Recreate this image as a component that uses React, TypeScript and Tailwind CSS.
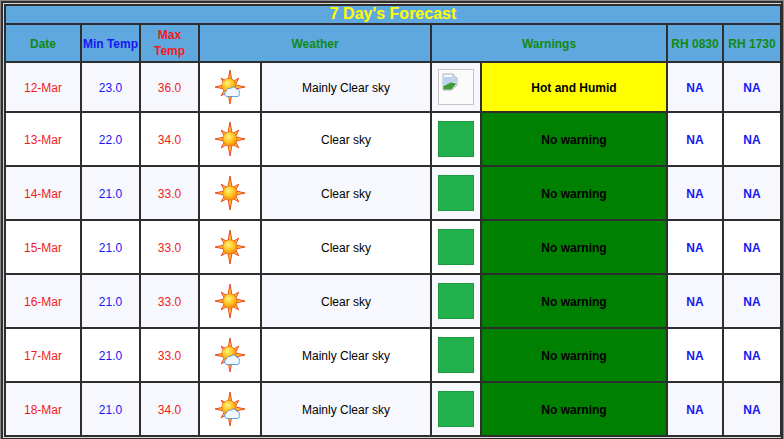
import React from "react";

type Day = {
  date: string;
  min: string;
  max: string;
  sky: "clear" | "mainly";
  warning: string;
};

const days: Day[] = [
  { date: "12-Mar", min: "23.0", max: "36.0", sky: "mainly", warning: "Hot and Humid" },
  { date: "13-Mar", min: "22.0", max: "34.0", sky: "clear", warning: "No warning" },
  { date: "14-Mar", min: "21.0", max: "33.0", sky: "clear", warning: "No warning" },
  { date: "15-Mar", min: "21.0", max: "33.0", sky: "clear", warning: "No warning" },
  { date: "16-Mar", min: "21.0", max: "33.0", sky: "clear", warning: "No warning" },
  { date: "17-Mar", min: "21.0", max: "33.0", sky: "mainly", warning: "No warning" },
  { date: "18-Mar", min: "21.0", max: "34.0", sky: "mainly", warning: "No warning" },
];

// ─── weather glyphs ───────────────────────────────────────────────
function SunIcon({ cloud, id }: { cloud: boolean; id: string }) {
  const cx = 17;
  const cy = 18;
  const rays = [0, 45, 90, 135, 180, 225, 270, 315].map((a) => {
    const len = a === 90 || a === 270 ? 17 : a % 90 === 0 ? 15 : 12.5;
    const r = (a * Math.PI) / 180;
    const px = Math.cos(r + Math.PI / 2);
    const py = Math.sin(r + Math.PI / 2);
    const bx = cx + Math.cos(r) * 5;
    const by = cy + Math.sin(r) * 5;
    const tx = cx + Math.cos(r) * len;
    const ty = cy + Math.sin(r) * len;
    return `${bx + px * 2.2},${by + py * 2.2} ${tx},${ty} ${bx - px * 2.2},${by - py * 2.2}`;
  });
  const sx = cloud ? cx - 1 : cx;
  const sy = cloud ? cy - 1.5 : cy;
  return (
    <svg width="34" height="36" viewBox="0 0 34 36" className="mx-auto block">
      <defs>
        <radialGradient id={id} cx="40%" cy="35%" r="70%">
          <stop offset="0%" stopColor="#fff27a" />
          <stop offset="55%" stopColor="#ffc21f" />
          <stop offset="100%" stopColor="#f57a0c" />
        </radialGradient>
      </defs>
      {rays.map((p, i) => (
        <polygon
          key={i}
          points={p}
          fill="#ffc62e"
          stroke="#e63a1e"
          strokeWidth="0.9"
          strokeLinejoin="round"
        />
      ))}
      <circle cx={sx} cy={sy} r="7.2" fill={`url(#${id})`} stroke="#ee6a12" strokeWidth="0.7" />
      {cloud && (
        <path
          d="M14 27.5 a2.8 2.8 0 0 1 -0.6 -5.4 a3 3 0 0 1 4.2 -2.6 a3.4 3.4 0 0 1 6.1 0.9 a2.7 2.7 0 0 1 2.3 4.3 a1.9 1.9 0 0 1 -1.2 2.8 z"
          fill="#f2f8ff"
          stroke="#3a8ad8"
          strokeWidth="0.8"
        />
      )}
    </svg>
  );
}

function BrokenImage() {
  return (
    <div className="mx-auto h-[36px] w-[36px] border border-[#c4c4c4] bg-[#fbfbfb] pl-[3px] pt-[3px]">
      <svg width="17" height="19" viewBox="0 0 17 19">
        <path d="M1 1 H11 L15 5 V12 L10 17 H1 Z" fill="#f4f8fc" stroke="#9aa4b0" strokeWidth="0.8" />
        <path d="M11 1 V5 H15" fill="#e5e9ee" stroke="#9aa4b0" strokeWidth="0.8" />
        <path d="M1.5 4 H10 V6 H14.5 V9 L1.5 12 Z" fill="#b9d3ee" />
        <path d="M1.5 16.5 V13 L9 9.5 L14.5 10.5 L9.5 16.5 Z" fill="#3e9a3a" />
      </svg>
    </div>
  );
}

// ─── table ───────────────────────────────────────────────────────
const cell = "border-2 border-[#2e2e2e] text-center align-middle p-0";
const txt = "pt-[2px]";

export default function App() {
  return (
    <div
      className="w-[784px] h-[439px] bg-white text-[12px]"
      style={{ fontFamily: '"Liberation Sans", Arial, sans-serif' }}
    >
      <div className="border border-[#8a8a8a]">
        <div className="border-2 border-[#2f2f2f] bg-[#d8d8d8] p-px">
          <table className="w-[776px] table-fixed border-collapse">
            <colgroup>
              <col className="w-[76px]" />
              <col className="w-[59px]" />
              <col className="w-[59px]" />
              <col className="w-[62px]" />
              <col className="w-[170px]" />
              <col className="w-[50px]" />
              <col className="w-[186px]" />
              <col className="w-[56px]" />
              <col className="w-[58px]" />
            </colgroup>
            <thead>
              <tr>
                <th
                  colSpan={9}
                  className={`${cell} h-[19px] pb-[2px] bg-[#5fa8df] text-[16px] font-bold leading-[14px] text-[#ffff00]`}
                >
                  7 Day's Forecast
                </th>
              </tr>
              <tr className="bg-[#5fa8df] font-bold">
                <th className={`${cell} ${txt} h-[38px] text-[#118a11]`}>Date</th>
                <th className={`${cell} ${txt} whitespace-nowrap text-[#1717f0]`}>Min Temp</th>
                <th className={`${cell} leading-[16px] text-[#f21b1b]`}>
                  Max
                  <br />
                  Temp
                </th>
                <th colSpan={2} className={`${cell} ${txt} text-[#118a11]`}>
                  Weather
                </th>
                <th colSpan={2} className={`${cell} ${txt} text-[#118a11]`}>
                  Warnings
                </th>
                <th className={`${cell} ${txt} whitespace-nowrap text-[#118a11]`}>RH 0830</th>
                <th className={`${cell} ${txt} whitespace-nowrap text-[#118a11]`}>RH 1730</th>
              </tr>
            </thead>
            <tbody>
              {days.map((d, i) => {
                const bg = i % 2 === 0 ? "bg-[#f6f8fd]" : "bg-white";
                const h = i === 0 ? "h-[50px]" : "h-[54px]";
                const hot = d.warning !== "No warning";
                return (
                  <tr key={d.date}>
                    <td className={`${cell} ${txt} ${h} ${bg} text-[#f21b1b]`}>{d.date}</td>
                    <td className={`${cell} ${txt} ${bg} text-[#1717f0]`}>{d.min}</td>
                    <td className={`${cell} ${txt} ${bg} text-[#f21b1b]`}>{d.max}</td>
                    <td className={`${cell} bg-white`}>
                      <SunIcon cloud={d.sky === "mainly"} id={`sun${i}`} />
                    </td>
                    <td className={`${cell} ${txt} ${bg} text-black`}>
                      {d.sky === "mainly" ? "Mainly Clear sky" : "Clear sky"}
                    </td>
                    <td className={`${cell} ${bg}`}>
                      {hot ? (
                        <BrokenImage />
                      ) : (
                        <div className="mx-auto h-[36px] w-[36px] border border-[#1c9a40] bg-[#22b14c]" />
                      )}
                    </td>
                    <td
                      className={`${cell} ${txt} font-bold text-black ${
                        hot ? "bg-[#ffff00]" : "bg-[#008000]"
                      }`}
                    >
                      {d.warning}
                    </td>
                    <td className={`${cell} ${txt} ${bg} font-bold text-[#1717f0]`}>NA</td>
                    <td className={`${cell} ${txt} ${bg} font-bold text-[#1717f0]`}>NA</td>
                  </tr>
                );
              })}
            </tbody>
          </table>
        </div>
      </div>
    </div>
  );
}
